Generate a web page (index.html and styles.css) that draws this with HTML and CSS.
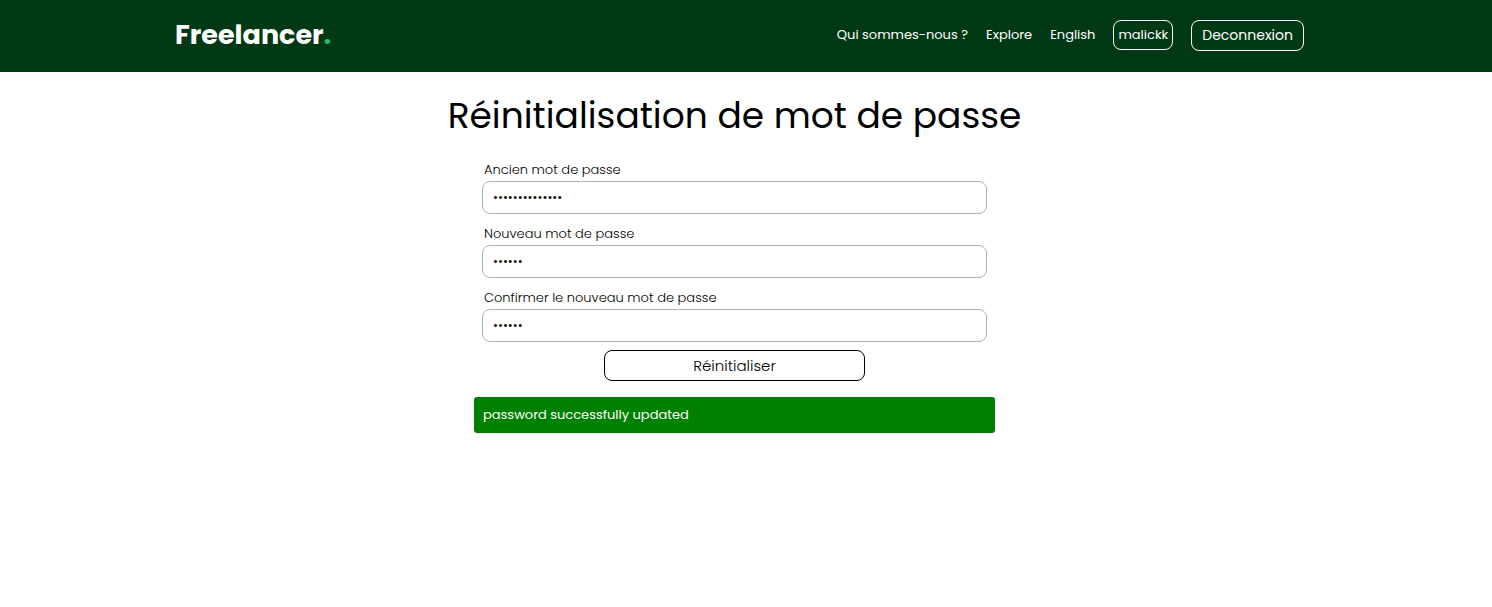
FILE: index.html
```html
<!DOCTYPE html>
<html lang="fr">
<head>
<meta charset="utf-8">
<meta name="viewport" content="width=device-width, initial-scale=1">
<title>Réinitialisation de mot de passe</title>
<link rel="stylesheet" href="styles.css">
</head>
<body>
<header class="navbar">
  <div class="navbar-inner">
    <a class="logo" href="#">Freelancer<span class="logo-dot">.</span></a>
    <nav class="nav-links">
      <a class="nav-link" href="#">Qui sommes-nous ?</a>
      <a class="nav-link" href="#">Explore</a>
      <a class="nav-link" href="#">English</a>
      <a class="nav-link user" href="#">malickk</a>
      <button class="logout" type="button">Deconnexion</button>
    </nav>
  </div>
</header>
<main class="page">
  <h1 class="title">Réinitialisation de mot de passe</h1>
  <form class="form">
    <div class="field">
      <label class="label" for="old">Ancien mot de passe</label>
      <input class="input" id="old" type="password" value="motdepasse1234">
    </div>
    <div class="field">
      <label class="label" for="new">Nouveau mot de passe</label>
      <input class="input" id="new" type="password" value="passer">
    </div>
    <div class="field">
      <label class="label" for="confirm">Confirmer le nouveau mot de passe</label>
      <input class="input" id="confirm" type="password" value="passer">
    </div>
    <button class="submit" type="button">Réinitialiser</button>
  </form>
  <p class="alert" role="status">password successfully updated</p>
</main>
</body>
</html>
```
FILE: styles.css
```css
* {
  box-sizing: border-box;
}

body {
  margin: 0;
  background: #fff;
  color: #000;
  font-family: Poppins, Inter, sans-serif;
}

.navbar {
  background: #013914;
}

.navbar-inner {
  display: flex;
  align-items: center;
  justify-content: space-between;
  max-width: 1142px;
  min-height: 72px;
  margin: 0 auto;
  padding: 0 13px 2px 0;
}

.logo {
  color: #fff;
  font-size: 27px;
  font-weight: 700;
  line-height: 40px;
  text-decoration: none;
}

.logo-dot {
  color: #1dbf73;
}

.nav-links {
  display: flex;
  align-items: center;
  gap: 18px;
}

.nav-link {
  color: #fff;
  font-size: 13px;
  font-weight: 400;
  line-height: 28px;
  text-decoration: none;
}

.user {
  padding: 0 4px;
  border: 1px solid #fff;
  border-radius: 8px;
}

.logout {
  padding: 0 10px;
  border: 1px solid #fff;
  border-radius: 8px;
  background: transparent;
  color: #fff;
  font: 400 14px/29px Poppins, Inter, sans-serif;
}

.page {
  display: flex;
  flex-direction: column;
  align-items: center;
  padding: 17px 23px 24px 0;
}

.title {
  margin: 0 0 15px;
  font-size: 36px;
  font-weight: 400;
  line-height: 54px;
  text-align: center;
}

.form {
  display: flex;
  flex-direction: column;
  gap: 8px;
  width: 100%;
  max-width: 505px;
}

.field {
  display: flex;
  flex-direction: column;
}

.label {
  padding: 0 2px;
  font-size: 13px;
  font-weight: 300;
  line-height: 23px;
}

.input {
  width: 100%;
  height: 33px;
  padding: 0 10px;
  border: 1px solid #b3b3b3;
  border-radius: 8px;
  background: #fff;
  color: #000;
  font: 400 12px Poppins, Inter, sans-serif;
}

.submit {
  align-self: center;
  width: 261px;
  max-width: 100%;
  padding: 0;
  border: 1px solid #000;
  border-radius: 8px;
  background: #fff;
  color: #000;
  font: 300 15px/29px Poppins, Inter, sans-serif;
}

.alert {
  width: 100%;
  max-width: 521px;
  margin: 16px 0 0;
  padding: 8px 9px;
  border-radius: 3px;
  background: #008000;
  color: #fff;
  font-size: 13px;
  font-weight: 400;
  line-height: 20px;
}
```
